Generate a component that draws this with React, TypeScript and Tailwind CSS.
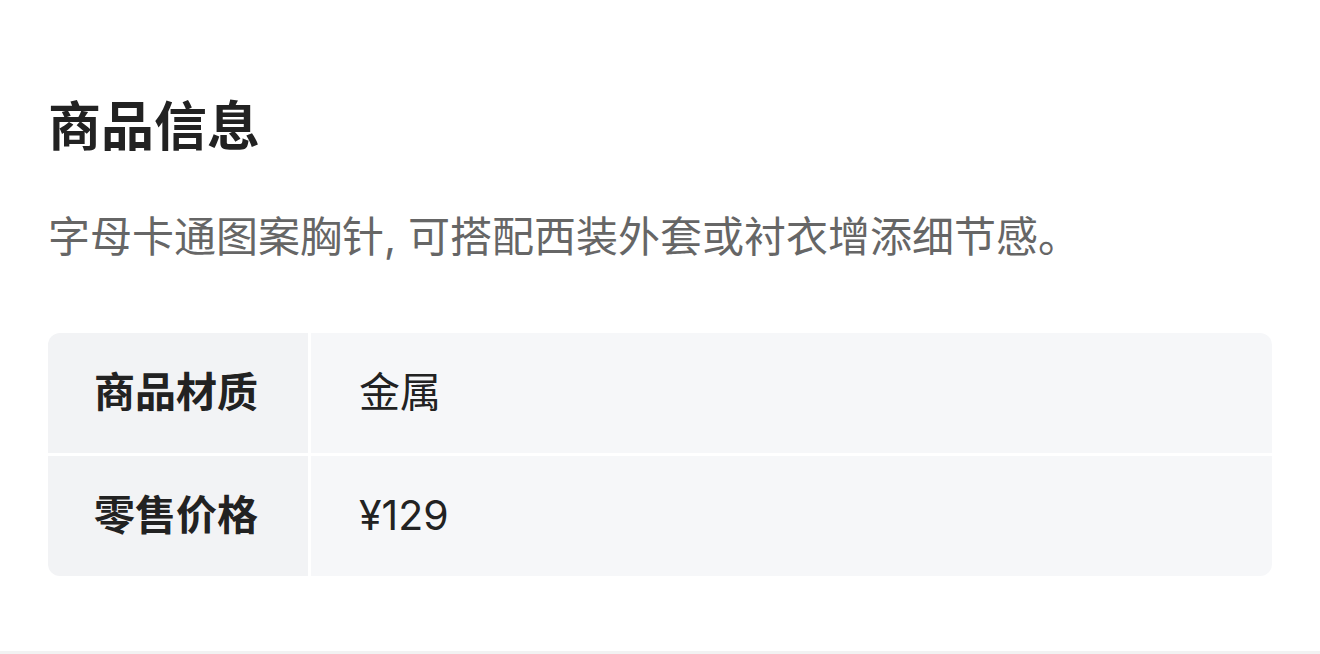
import React from 'react';

const rows = [
  { label: '商品材质', value: '金属' },
  { label: '零售价格', value: '¥129' },
];

export default function App() {
  return (
    <div className="w-full bg-white font-['Inter','Noto_Sans_CJK_SC',sans-serif]">
      <section className="px-12 pt-[91px] pb-[75px] border-b-[3px] border-[#f2f2f2]">
        <h2 className="text-[53px] leading-[72px] font-bold text-[#222]">商品信息</h2>
        <p className="mt-[44px] text-[42px] leading-[60px] text-[#666]">
          字母卡通图案胸针, 可搭配西装外套或衬衣增添细节感。
        </p>

        {/* spec table */}
        <div className="mt-[66px] grid grid-cols-[260px_1fr] gap-[3px] rounded-[12px] overflow-hidden">
          {rows.map((r) => (
            <React.Fragment key={r.label}>
              <div className="h-[120px] flex items-center pl-[46px] bg-[#f2f3f5] text-[41px] font-bold text-[#222]">
                {r.label}
              </div>
              <div className="h-[120px] flex items-center pl-12 bg-[#f6f7f9] text-[41px] text-[#222]">
                {r.value}
              </div>
            </React.Fragment>
          ))}
        </div>
      </section>
    </div>
  );
}
